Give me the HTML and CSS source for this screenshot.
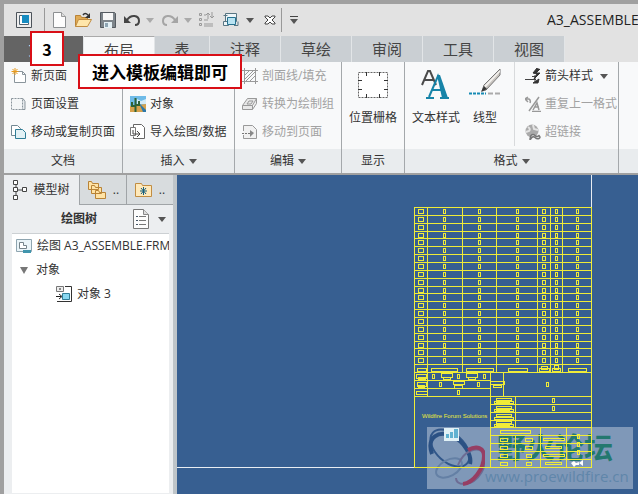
FILE: index.html
```html
<!DOCTYPE html>
<html lang="zh-CN">
<head>
<meta charset="utf-8">
<title>A3_ASSEMBLE</title>
<link rel="stylesheet" href="styles.css">
</head>
<body>
<div class="window">
  <header class="titlebar">
    <div class="quick">
      <button aria-label="窗口"><svg width="16" height="16"><path d="M.5.5h15v15H.5z" fill="#eee" stroke="#4c535a"/><path d="M3.500 3.500h9v9h-9z" fill="#fff" stroke="#53616e"/><path d="M6 3h7v8H6z" fill="#168bc0"/></svg></button>
      <i class="rule"></i>
      <button aria-label="新建"><svg width="16" height="16"><path d="M1.500.5h8l4 4v11h-12z" fill="#fdfdfd" stroke="#8d9092"/><path d="M9.500.5v4h4" fill="#ddd" stroke="#999"/></svg></button>
      <button aria-label="打开"><svg width="17" height="16"><path d="M.5 14.500V3.500h5l1 2h6v3" fill="#e0ab55" stroke="#b98336"/><path d="M.5 14.500l3-7h13l-4 7z" fill="#ffe6aa" stroke="#c18d42"/><path d="M8 3q2-3 5 0" fill="none" stroke="#333" stroke-width="1.500"/><path d="M15 1v5h-5z" fill="#333"/></svg></button>
      <button aria-label="保存"><svg width="16" height="16"><path d="M.5.5h14l1 1v14H.5z" fill="#7e858b" stroke="#555b61"/><path d="M3 1h10v7H3z" fill="#f7f7f7"/><path d="M4 10h8v6H4z" fill="#e4f0f5"/><path d="M5 11h3v4H5z" fill="#8ea5b3"/></svg></button>
      <button aria-label="撤消"><svg width="17" height="16"><path d="M3 8C7 2 15 3 15 9q0 4-4 4" fill="none" stroke="#454545" stroke-width="2"/><path d="M0 4v7h7z" fill="#454545"/></svg></button>
      <button class="pale" aria-label="撤消列表"><i class="down"></i></button>
      <button aria-label="重做"><svg width="17" height="16"><path d="M13 8C9 2 1 3 1 9q0 4 4 4" fill="none" stroke="#a5a5a5" stroke-width="2"/><path d="M16 4v7H9z" fill="#a5a5a5"/></svg></button>
      <button class="pale" aria-label="重做列表"><i class="down"></i></button>
      <button aria-label="重新生成"><svg width="16" height="16" fill="none" stroke="#999"><path d="M.5 1.500h2v2h-2zM.5 6.500h2v2h-2zM.5 11.500h2v2h-2zM5 8h4M5 12h9M5 14h9M5 3h2"/><path d="M9 7V1M7 3l2-2 2 2M13 0v6M11 4l2 2 2-2"/></svg></button>
      <button aria-label="窗口切换"><svg width="16" height="16"><path d="M2.500 1.500h11v8h-11zM.5 9.500h5v4h-5z" fill="#edf5f8" stroke="#587582"/><path d="M.5 3.500h4M11 13.500h4v-4" stroke="#587582" fill="none"/><path d="M4.500 5.500h8v7h-8z" fill="#b9e3f2" stroke="#26718f"/></svg></button>
      <button aria-label="窗口列表"><i class="down"></i></button>
      <button aria-label="关闭"><svg width="12" height="16"><path d="M1 4h3l2 2 2-2h3v1L8 8l3 3v1H8l-2-2-2 2H1v-1l3-3-3-3z" fill="#fff" stroke="#444"/></svg></button>
      <i class="rule"></i>
      <button class="custom" aria-label="自定义"><i class="down"></i></button>
    </div>
    <div class="caption">A3_ASSEMBLE</div>
  </header>

  <nav class="tabs">
    <button class="file">文件</button>
    <button class="active">布局</button>
    <button class="short">表</button>
    <button>注释</button>
    <button>草绘</button>
    <button>审阅</button>
    <button>工具</button>
    <button>视图</button>
  </nav>

  <section class="ribbon">
    <div class="group g-doc">
      <div class="body stack">
        <button><svg width="16" height="16"><path d="M3.500 3.500h8l3 3v8h-11z" fill="#fff" stroke="#8a959c"/><path d="M11.500 3.500v3h3" fill="none" stroke="#8a959c"/><path d="M4 0v7M.5 3.500h7M1.500 1l5 5M6.500 1l-5 5" stroke="#e89a1c"/></svg>新页面</button>
        <button><svg width="16" height="16"><path d="M9 2.500h3l2 3v8H9z" fill="#e5e9ec" stroke="#8a959c"/><path d="M.5 2.500h11v11H.5z" fill="#f4f6f7" stroke="#8a959c" stroke-dasharray="2 1"/></svg>页面设置</button>
        <button><svg width="16" height="16"><path d="M.5 1.500h6l3 3v7h-9z" fill="#fff" stroke="#738893"/><path d="M4.500 5.500h7l3 3v6h-10z" fill="#e2f1f5" stroke="#2f7d96"/></svg>移动或复制页面</button>
      </div>
      <footer>文档</footer>
    </div>
    <div class="group g-insert">
      <div class="body stack end">
        <button><svg width="16" height="16"><path d="M0 0h16v16H0z" fill="#6fbbe8"/><path d="M7 3l4 2 5-2v5H7z" fill="#d4ebf6"/><path d="M0 10l16-2v8H0z" fill="#d7a24c"/><path d="M9 7l7 7v2h-3z" fill="#2d78a8"/><path d="M5.500 16V2M2 6v4h3M9 5v4H6" fill="none" stroke="#2f6336" stroke-width="2"/></svg>对象</button>
        <button><svg width="16" height="16"><path d="M3.500 3.500V.5h8l3 3v11h-11v-2" fill="#fff" stroke="#666"/><path d="M.5 3.500h5v8h-5z" fill="#fff" stroke="#777"/><path d="M3 6v4h6M7 7l3 3-3 3" fill="none" stroke="#444"/></svg>导入绘图/数据</button>
      </div>
      <footer>插入<i class="down"></i></footer>
    </div>
    <div class="group g-edit">
      <div class="body stack">
        <button disabled><svg width="16" height="16" fill="none" stroke="#999"><path d="M0 2.500h16M0 13.500h16M2.500 0v16M13.500 0v16M3 7l4-4M3 11l8-8M4 13l9-9M8 13l5-5"/></svg>剖面线/填充</button>
        <button disabled><svg width="16" height="16" fill="#e8e8e8" stroke="#999"><path d="M.5 9.500l5-7h9l-4 7zM.5 9.500v4h10v-4M10.500 13.500l4-6v-5"/><path d="M5 8l2-3h4l-2 3z"/></svg>转换为绘制组</button>
        <button disabled><svg width="16" height="16"><path d="M1.500 7V1.500h9l4 4v9h-13V11" fill="#f1f1f1" stroke="#999"/><path d="M0 9.500h8" stroke="#777" stroke-dasharray="2 1"/><path d="M8 6l4 3-4 4z" fill="#888"/></svg>移动到页面</button>
      </div>
      <footer>编辑<i class="down"></i></footer>
    </div>
    <div class="group g-show">
      <div class="body wide">
        <button><svg width="32" height="32"><path d="M1.500 3.500h29v25h-29z" fill="#fff" stroke="#666" stroke-dasharray="2 1"/><path d="M9.500 3v4M22.500 3v4M9.500 25v4M22.500 25v4M1 11.500h4M1 20.500h4M27 11.500h4M27 20.500h4" stroke="#333"/></svg>位置栅格</button>
      </div>
      <footer>显示</footer>
    </div>
    <div class="group g-format">
      <div class="body wide">
        <button class="b-text"><svg width="32" height="32"><path d="M2 16L8 2h2l6 14M4 11h10" fill="none" stroke="#4b4b4b" stroke-width="2"/><path d="M6 29h8M9 28L18 7l8 21M12 21h12M20 29h9" fill="none" stroke="#1784a8" stroke-width="2"/><path d="M17 6h3l8 23h-6z" fill="#1784a8"/></svg>文本样式</button>
        <button class="b-line"><svg width="34" height="32"><path d="M14 22l2-6L32 0v6L18 21z" fill="#c9c5c0" stroke="#777"/><path d="M16 17L32 1v2L17 19z" fill="#f4f2ef"/><path d="M13 23l3-6 3 3z" fill="#383838"/><path d="M1 24.500h17" stroke="#168bb4" stroke-width="2" stroke-dasharray="3 1"/><path d="M20 24.500h13" stroke="#aaa" stroke-width="2" stroke-dasharray="5 2"/></svg>线型</button>
        <div class="stack">
          <button><svg width="16" height="16"><path d="M0 11.500h11M7 8.500h5M10 7v7" stroke="#444" fill="none"/><path d="M12 0L8 5l4 1-3 5 6-6h-4l4-4M8 15l6-4-1 4z" fill="#333" stroke="#333"/></svg>箭头样式<i class="down"></i></button>
          <button disabled><svg width="16" height="16" fill="none" stroke="#999"><path d="M0 3h4q2 1 1 4M3 1L0 3l3 3M4 15L14 1M7 15.500h9M8 14l4-7 2 7M10 11h4" stroke-width="1.500"/></svg>重复上一格式</button>
          <button disabled><svg width="16" height="16"><circle cx="7" cy="7" r="6.500" fill="#aaa"/><path d="M3 3q3 2 1 4l-3 1M8 1l1 4 4 1" fill="none" stroke="#e4e4e4" stroke-width="2"/><path d="M6 11.500q2-2 4 0t4 0q2 2 0 3t-4-1-4 1-0-3z" fill="#eee" stroke="#777" stroke-width="1.500"/></svg>超链接</button>
        </div>
      </div>
      <footer>格式<i class="down"></i></footer>
    </div>
    <div class="group g-rest"><div class="body"></div><footer></footer></div>
  </section>

  <main class="work">
    <aside class="side">
      <div class="side-tabs">
        <button class="active"><svg width="14" height="20" fill="#fff" stroke="#444"><path d="M3 5v10M3 10h6" fill="none"/><path d="M.5.5h4v4h-4zM.5 7.500h4v4h-4zM9.500 7.500h4v4h-4zM.5 15.500h4v4h-4z"/></svg>模型树</button>
        <button aria-label="文件夹"><svg width="20" height="20" fill="#ffe3a5" stroke="#b98336"><path d="M1.500 9.500v-8h3l1 2h6v6zM4.500 13.500v-8h3l1 2h6v6zM8.500 18.500v-8h3l1 2h6v6z"/></svg><span>..</span></button>
        <button aria-label="收藏夹"><svg width="18" height="18"><path d="M.5 15.500v-13h6l1 2h9v11z" fill="#ffe9ba" stroke="#c18d42"/><path d="M8.500 6v8M5 10h7M6 7l5 6M11 7l-5 6" stroke="#17607f"/></svg><span>..</span></button>
      </div>
      <div class="side-head"><h2>绘图树</h2>
        <button aria-label="树设置"><svg width="16" height="20"><path d="M.5.5h10l5 5v14H.5z" fill="#fcfcfc" stroke="#777"/><path d="M10.500.5v5h5" fill="#ddd" stroke="#888"/><path d="M6 7.500h7M6 11.500h7M6 15.500h7" stroke="#777"/><path d="M3 7h2v1H3zM3 11h2v1H3zM3 15h2v1H3z" fill="#456"/></svg><i class="down"></i></button>
      </div>
      <ul class="tree">
        <li><svg width="16" height="16"><path d="M.5 1.500h15v12H.5z" fill="#eaf4f8" stroke="#8fa5b0"/><path d="M3.500 4.500h4v3h3v3h-7z" fill="#fff" stroke="#75838a"/><path d="M7 12h8v3H7z" fill="#4195ad"/></svg>绘图 A3_ASSEMBLE.FRM</li>
        <li class="open"><i class="down"></i>对象</li>
        <li class="leaf"><svg width="16" height="16"><path d="M9 .5h6.500v15H1" fill="none" stroke="#333"/><path d="M.5.500h7v5h-7z" fill="#eee" stroke="#777"/><path d="M3 3h2M0 10.500h5M3 8l3 2.500L3 13" stroke="#222" fill="none"/><path d="M6.500 7.500h7v6h-7z" fill="#8ad8f0" stroke="#327d96"/></svg>对象 3</li>
      </ul>
    </aside>
    <div class="canvas">
      <div class="mark">
        <svg width="58" height="62" fill="none"><ellipse cx="23" cy="21" rx="23" ry="14" transform="rotate(42 23 21)" stroke="#31578a" stroke-width="2"/><path d="M5 27C-1 10 12 3 25 9s20 20 18 28" stroke="#2b5184" stroke-width="4"/><ellipse cx="22" cy="41" rx="14" ry="8" transform="rotate(-28 22 41)" stroke="#6480a5" stroke-width="2"/><path d="M31 38c6-15 21-20 26-11s-5 30-20 30c-6 0-8-3-8-6" stroke="#6d6c94" stroke-width="2"/><path d="M41 23c9-5 16-2 16 6 0 13-11 27-21 28" stroke="#963e63" stroke-width="4"/></svg>
        <div><strong>野火论坛</strong><span>www.proewildfire.cn</span></div>
      </div>
      <svg id="sheet" width="461" height="319" viewBox="177 175 461 319" role="img" aria-label="图框"></svg>
    </div>
  </main>

  <div class="callout step">3</div>
  <div class="callout note">进入模板编辑即可</div>
</div>
<script src="script.js"></script>
</body>
</html>
```
FILE: styles.css
```css
* { box-sizing: border-box; }
body {
  margin: 0;
  overflow: hidden;
  font: 12px/16px "Open Sans", "Noto Sans CJK SC", sans-serif;
  color: #333;
}
button {
  padding: 0;
  border: 0;
  background: none;
  font: inherit;
  color: inherit;
  white-space: nowrap;
}
svg { display: block; flex: none; }
.window {
  position: relative;
  display: flex;
  flex-direction: column;
  min-height: 100vh;
  border: solid #a0a0a0;
  border-width: 4px 0 0 4px;
  background: #e2e2e2;
}
.down {
  flex: none;
  display: block;
  border: 4px solid transparent;
  border-top: 5px solid #555;
  border-bottom: 0;
}
.pale .down { border-top-color: #aaa; }

.titlebar { display: flex; align-items: center; height: 32px; padding-left: 12px; overflow: hidden; }
.quick {
  display: grid;
  grid-template-columns: 28px 8px 23px 25px 24px 22px 16px 22px 15px 24px 23px 18px 17px 9px 8px;
  align-items: center;
  justify-items: start;
}
.rule { width: 1px; height: 24px; background: #999; }
.custom { border-top: 1px solid #444; padding-top: 2px; }
.caption { margin-left: 249px; font-size: 14px; line-height: 20px; color: #222; }

.tabs { display: flex; height: 26px; font-size: 15px; color: #444; }
.tabs button { width: 71px; background: #cacfd3; border-right: 1px solid #e2e5e7; }
.tabs .file { width: 80px; background: #646464; color: #eee; }
.tabs .active { background: #f8f9fa; border-top: 1px solid #aaa; }
.tabs .short { width: 55px; }

.ribbon { display: flex; background: #f8f9fa; border-bottom: 2px solid #a0a0a0; }
.group { flex: none; border-right: 1px solid #a4a8ab; }
.body { display: flex; height: 87px; padding-left: 7px; }
.stack { display: flex; flex-direction: column; height: 87px; }
.stack button { display: flex; flex: none; align-items: center; gap: 4px; height: 28px; }
.stack.end { padding-top: 28px; }
.stack .down { margin-left: 3px; }
.stack button:disabled { color: #a2a2a2; }
.group footer {
  display: flex;
  align-items: center;
  justify-content: center;
  gap: 4px;
  height: 24px;
  background: #e9ecee;
}
.g-doc { width: 119px; }
.g-insert { width: 112px; }
.g-edit { width: 107px; }
.g-show { width: 63px; }
.g-format { width: 214px; }
.g-rest { flex: 1; border: 0; }
.wide > button {
  display: flex;
  flex-direction: column;
  align-items: center;
  gap: 9px;
  padding-top: 7px;
}
.g-show .body { justify-content: center; padding: 0; }
.b-line { margin-left: 8px; }
.wide .stack {
  height: 84px;
  margin-left: 12px;
  padding-left: 10px;
  border-left: 1px solid #d8dadc;
}

.work { display: flex; flex: 1; }
.side { flex: none; width: 173px; background: #eceef0; border-right: 4px solid #bfc5c9; }
.side-tabs { display: flex; height: 30px; }
.side-tabs button {
  display: flex;
  align-items: center;
  justify-content: center;
  gap: 6px;
  width: 47px;
  border: solid #a0a4a7;
  border-width: 0 0 1px 1px;
  background: #d8dcde;
}
.side-tabs .active { width: 75px; border: 0; background: none; }
.side-head { display: flex; align-items: center; height: 28px; padding-left: 57px; }
.side-head h2 { margin: 0; font-size: 12px; }
.side-head button { display: flex; align-items: center; gap: 9px; margin-left: 36px; }
.tree {
  height: 260px;
  margin: 0 4px 0 8px;
  padding: 0;
  overflow: hidden;
  list-style: none;
  background: #fff;
  border-top: 1px solid #ccd0d3;
}
.tree li { display: flex; align-items: center; gap: 5px; height: 24px; padding-left: 4px; white-space: nowrap; }
.tree .open { padding-left: 8px; gap: 8px; }
.open .down { border-top: 7px solid #777; }
.tree .leaf { padding-left: 44px; }

.canvas { position: relative; flex: 1; min-width: 0; overflow: hidden; background: #375f91; }
#sheet { position: relative; }
.mark {
  position: absolute;
  left: 250px;
  top: 252px;
  display: flex;
  width: 206px;
  height: 62px;
  background: rgba(255, 255, 255, .36);
  white-space: nowrap;
}
.mark strong {
  display: block;
  padding-left: 12px;
  font: 700 29px/38px "Noto Sans CJK SC", sans-serif;
  color: rgba(10, 112, 91, .8);
}
.mark span { font-size: 15px; line-height: 22px; color: #6086aa; }
.callout {
  position: absolute;
  display: grid;
  place-items: center;
  height: 35px;
  border: 2px solid #d90f17;
  background: #fff;
  font: 700 17px/24px "Noto Sans CJK SC", sans-serif;
  color: #000;
  white-space: nowrap;
}
.step { left: 26px; top: 27px; width: 34px; font-size: 16px; }
.note { left: 74px; top: 50px; width: 164px; }
```
FILE: script.js
```js
const sheet = document.getElementById("sheet");
const NS = "http://www.w3.org/2000/svg";
const yellow = "#f0ec38";

function add(tag, attrs) {
  const node = document.createElementNS(NS, tag);
  for (const key in attrs) node.setAttribute(key, attrs[key]);
  sheet.append(node);
  return node;
}
const path = (d, stroke = yellow) =>
  add("path", { d, stroke, fill: "none", "shape-rendering": "crispEdges" });
const h = (x1, x2, y) => path(`M${x1} ${y + 0.5}H${x2}`);
const v = (x, y1, y2) => path(`M${x + 0.5} ${y1}V${y2}`);
// outlined text placeholder centred on (cx, cy)
const box = (cx, cy, w, hgt) =>
  path(`M${Math.round(cx - w / 2) + 0.5} ${Math.round(cy - hgt / 2) + 0.5}h${w}v${hgt}h${-w}z`);

path("M591.5 175V207M177 467.5H591", "#e8edf2");

// parts list
const rows = Array.from({ length: 22 }, (_, i) => Math.round(207 + i * 7.86));
rows.forEach(y => h(414, 592, y));
[414, 427, 462, 496, 537, 550, 562, 591].forEach(x => v(x, 207, 372));
rows.slice(0, 20).forEach(y => {
  [[420, 5], [444, 2], [479, 2], [517, 2], [543, 3], [556, 2], [577, 2]]
    .forEach(([x, w]) => box(x, y + 4, w, 4));
});
[[421, 9], [444, 26], [479, 27], [517, 19], [544, 10], [556, 8], [577, 18]]
  .forEach(([x, w]) => box(x, 369, w, 3));
box(544, 367, 6, 3);
box(556, 367, 4, 4);

// title block
v(414, 372, 468); v(591, 372, 468); v(490, 372, 468);
v(427, 372, 396); v(503, 372, 396); v(515, 396, 427); v(515, 435, 467);
v(540, 427, 467); v(566, 427, 467);
[380, 388].forEach(y => h(414, 490, y));
h(414, 592, 396);
[404, 412, 420, 427, 435, 443, 451, 459].forEach(y => h(490, 592, y));
h(414, 592, 467);
[[421, 376, 10, 4], [421, 378, 7, 2], [433, 376, 2, 4], [446, 375, 11, 4], [446, 378, 7, 2],
 [458, 376, 2, 4], [471, 375, 11, 4], [471, 378, 7, 2], [484, 376, 2, 4], [421, 384, 9, 4],
 [421, 386, 6, 2], [440, 384, 2, 4], [458, 382, 11, 3], [458, 386, 8, 3], [478, 384, 2, 4],
 [421, 392, 11, 3], [458, 392, 2, 4], [497, 382, 14, 3], [497, 386, 8, 2],
 [547, 384, 2, 4], [553, 400, 2, 4], [553, 408, 2, 4]].forEach(b => box(...b));
[399, 402, 407, 410, 415, 418, 422, 425].forEach((y, i) => box(503, y, i % 2 ? 19 : 15, 2));
[401, 409, 416, 424].forEach(y => add("rect", { x: 496, y, width: 14, height: 2, fill: yellow }));
box(515, 431, 30, 3);
[439, 447, 455, 463].forEach((y, i) => {
  box(503, y, 7, 3);
  box(528, y, i > 1 ? 5 : 7, 3);
  box(553, y, i % 2 ? 16 : 21, 2);
  if (i < 3) box(578, y - 3, 2, 4);
});
const label = add("text", { x: 422, y: 418, fill: yellow, "font-size": 6, "font-family": "Liberation Sans" });
label.textContent = "Wildfire Forum Solutions";
add("rect", { x: 444, y: 428, width: 15, height: 13, fill: "#e0f1f6" });
add("path", { d: "M446 438v-4h3v4zM450 438v-6h3v6zM454 438v-9h4v9z", fill: "#60b2d1" });
add("path", { d: "M571 463l3-2 2 2 3-1v3h-3l-2 2zM579 463l4-3v6z", fill: "#fff" });
```
